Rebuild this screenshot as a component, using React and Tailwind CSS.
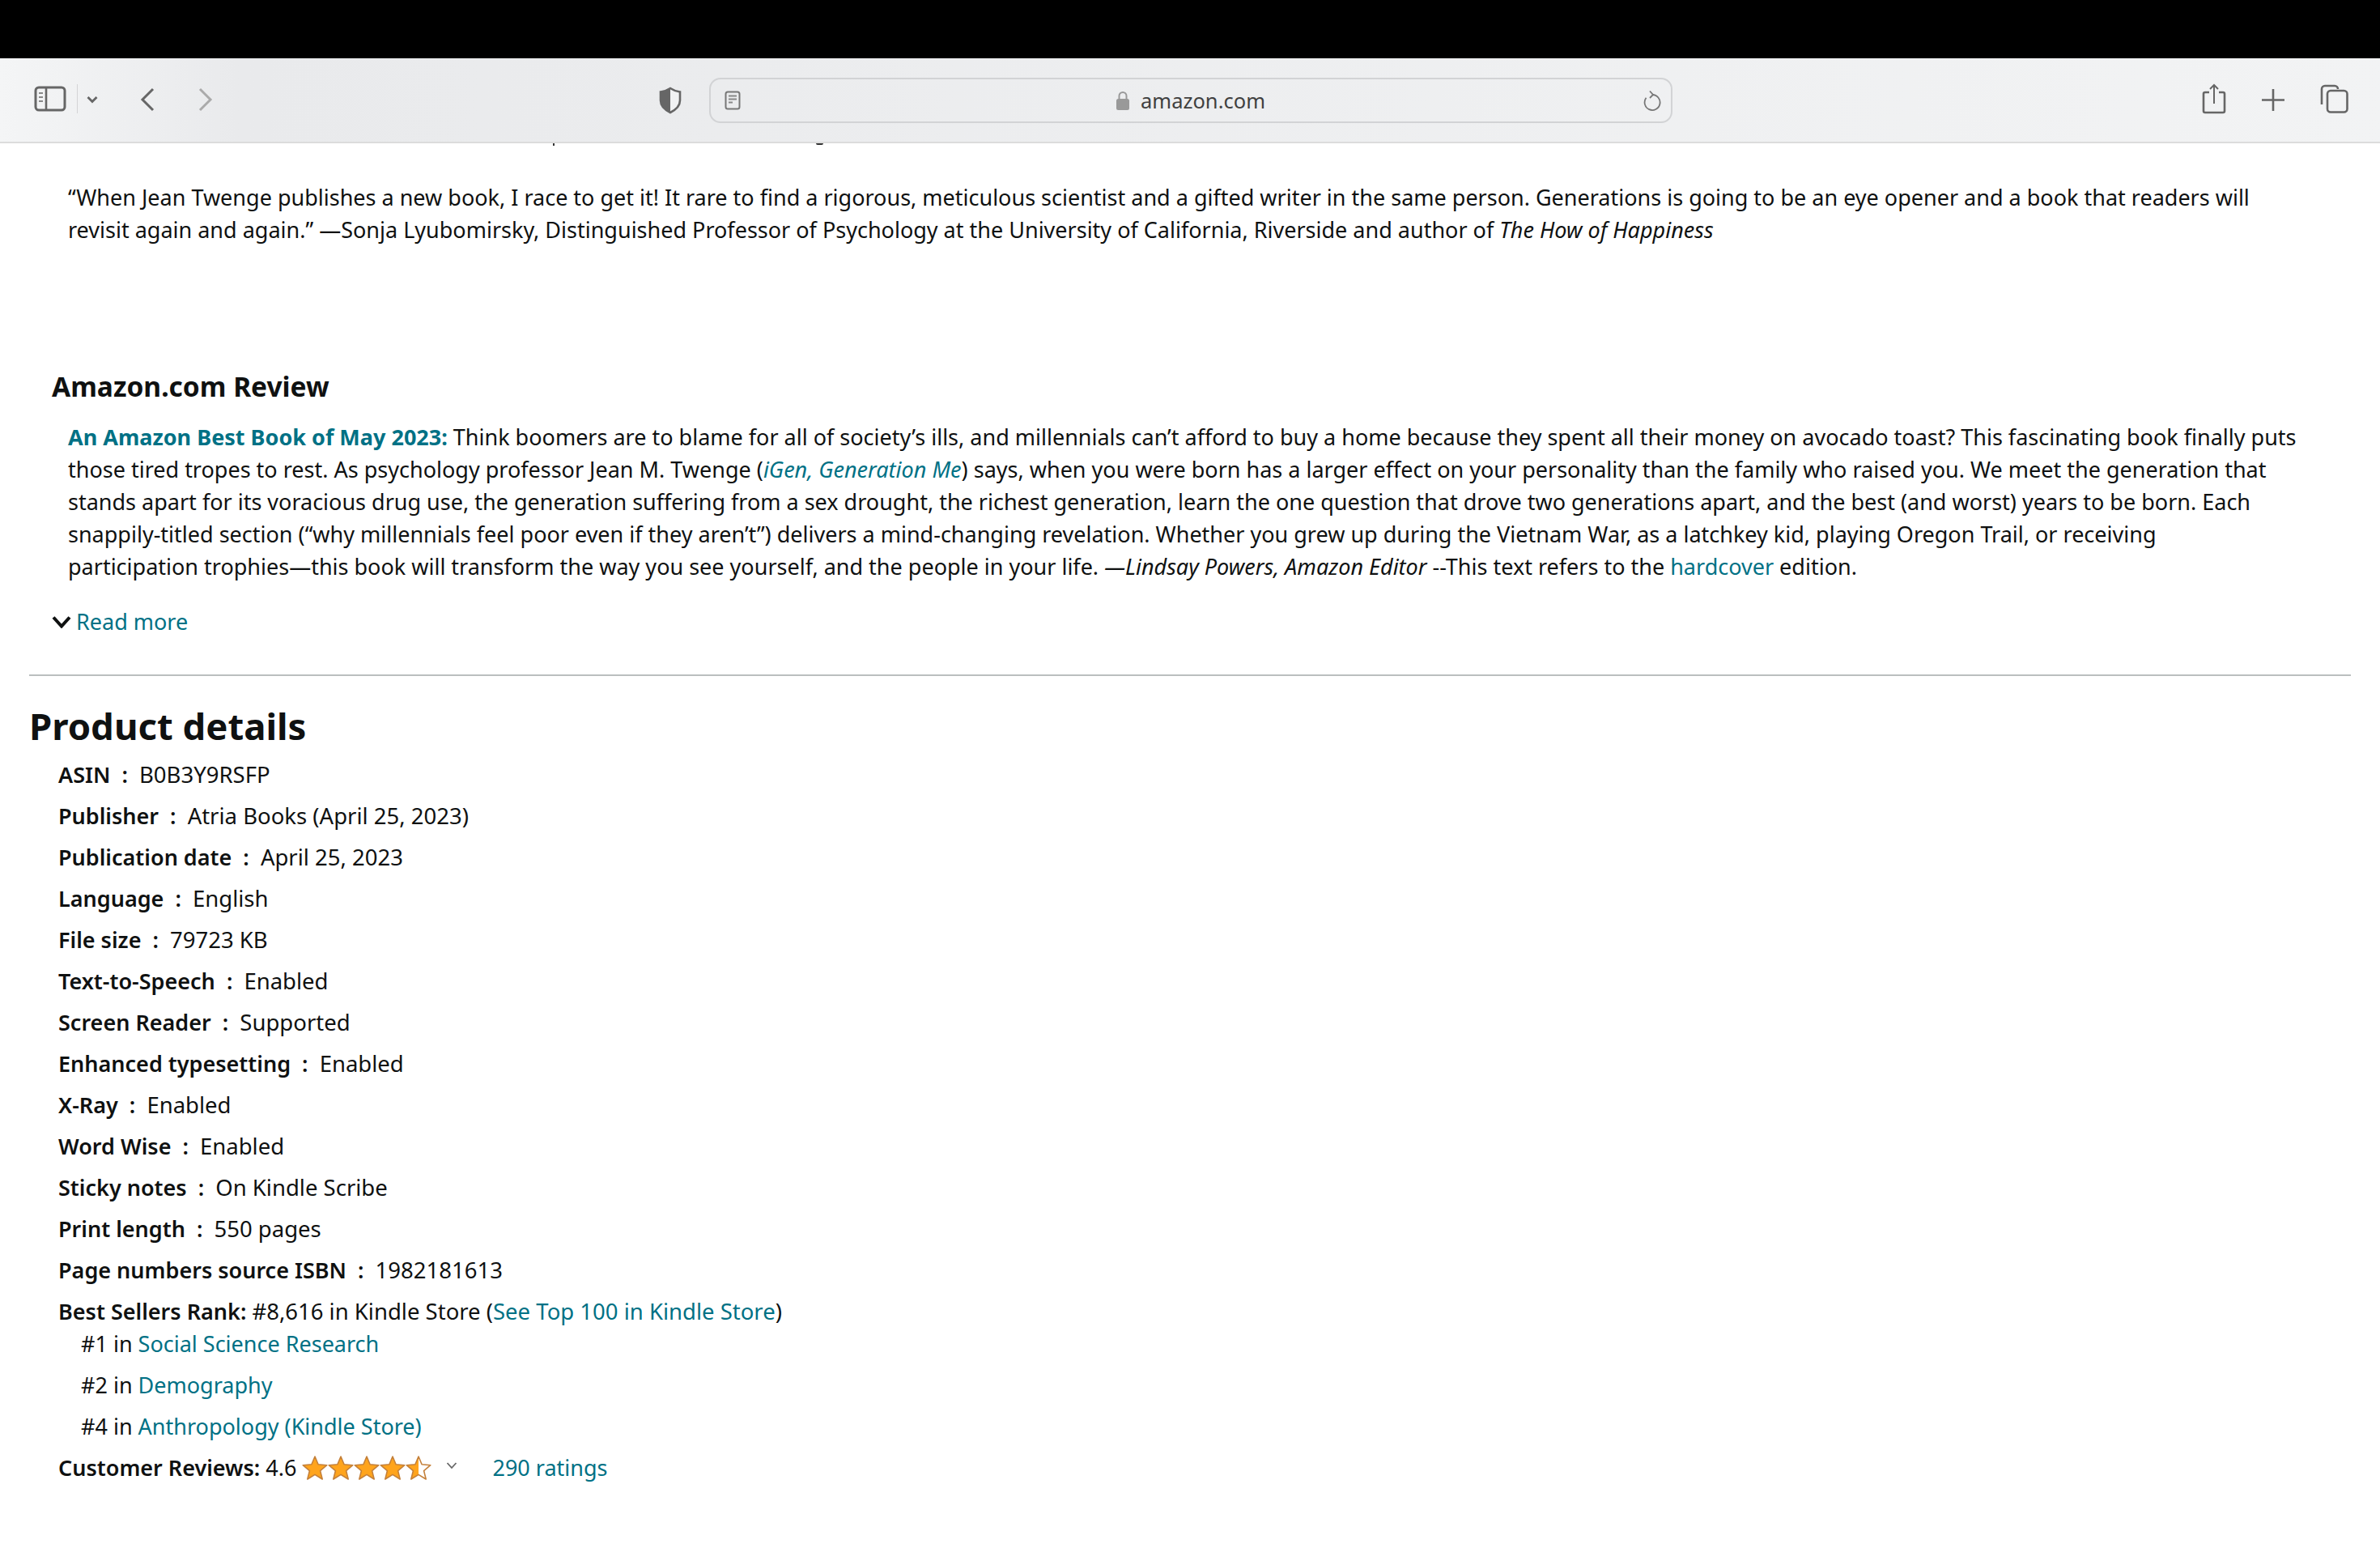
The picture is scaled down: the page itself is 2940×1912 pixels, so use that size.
import React from "react";

const Link = ({ children, className = "" }) => (
  <span className={`text-[#007185] ${className}`}>{children}</span>
);

const details = [
  ["ASIN", "B0B3Y9RSFP"],
  ["Publisher", "Atria Books (April 25, 2023)"],
  ["Publication date", "April 25, 2023"],
  ["Language", "English"],
  ["File size", "79723 KB"],
  ["Text-to-Speech", "Enabled"],
  ["Screen Reader", "Supported"],
  ["Enhanced typesetting", "Enabled"],
  ["X-Ray", "Enabled"],
  ["Word Wise", "Enabled"],
  ["Sticky notes", "On Kindle Scribe"],
  ["Print length", "550 pages"],
  ["Page numbers source ISBN", "1982181613"],
];

const ranks = [
  ["#1", "Social Science Research"],
  ["#2", "Demography"],
  ["#4", "Anthropology (Kindle Store)"],
];

const Star = ({ half }) => (
  <svg width="32" height="32" viewBox="0 0 32 32">
    <defs>
      <linearGradient id="halfStar">
        <stop offset="50%" stopColor="#ffa41c" />
        <stop offset="50%" stopColor="#ffffff" />
      </linearGradient>
    </defs>
    <path
      d="M16 2l4.100 9.800 10.700.9-8.200 6.900 2.600 10.400-9.200-5.600-9.200 5.600 2.600-10.400-8.200-6.900 10.700-.9z"
      fill={half ? "url(#halfStar)" : "#ffa41c"}
      stroke="#c4803a"
      strokeWidth="1.600"
      strokeLinejoin="round"
    />
  </svg>
);

const Toolbar = () => (
  <div className="h-[105px] shrink-0 flex items-center bg-linear-to-r from-[#f4f5f6] via-[#e9eaec] via-10% to-[#f2f3f4] border-b-2 border-[#dcdcdc] relative">
    {/* sidebar + chevron */}
    <svg width="40" height="32" viewBox="0 0 40 32" fill="none" stroke="#666" strokeWidth="3" className="ml-[42px] -mt-[3px]">
      <rect x="2" y="2" width="36" height="28" rx="4" />
      <path d="M15 2v28" strokeWidth="2.600" />
      <path d="M6 9h5M6 14h5M6 19h5" strokeWidth="2" stroke="#888" />
    </svg>
    <div className="ml-[13px] h-[36px] w-[1px] bg-[#d4d4d6] -mt-[3px]" />
    <svg width="14" height="10" viewBox="0 0 14 10" fill="none" stroke="#666" strokeWidth="2.800" className="ml-[11px] -mt-[2px]">
      <path d="M1.500 2l5.500 5.500L12.500 2" />
    </svg>
    <svg width="18" height="30" viewBox="0 0 18 30" fill="none" stroke="#666" strokeWidth="3" className="ml-[52px] -mt-[2px]">
      <path d="M16 2L3 15l13 13" />
    </svg>
    <svg width="18" height="30" viewBox="0 0 18 30" fill="none" stroke="#aaa" strokeWidth="3" className="ml-[54px] -mt-[2px]">
      <path d="M2 2l13 13L2 28" />
    </svg>

    {/* privacy shield */}
    <svg width="28" height="34" viewBox="0 0 28 34" className="ml-[551px]">
      <path d="M14 2C11 4 6 6 2 6.500V17c0 7 5 11.500 12 15 7-3.500 12-8 12-15V6.500C22 6 17 4 14 2z" fill="#f1f2f3" stroke="#666" strokeWidth="2.600" />
      <path d="M14 2C11 4 6 6 2 6.500V17c0 7 5 11.500 12 15z" fill="#666" />
    </svg>

    {/* address bar */}
    <div className="ml-[34px] w-[1190px] h-[56px] rounded-[14px] border-2 border-[#d2d3d5] flex items-center relative">
      <svg width="20" height="24" viewBox="0 0 20 24" fill="none" stroke="#777" strokeWidth="2" className="ml-[17px]">
        <rect x="1.500" y="1.500" width="17" height="21" rx="2.500" />
        <path d="M5 6.500h10M5 10.500h10M5 14.500h5" strokeWidth="1.800" stroke="#888" />
      </svg>
      <div className="absolute left-0 right-0 top-0 bottom-0 flex items-center justify-center gap-[14px] text-[25.500px] text-[#404040] font-['Noto_Sans',sans-serif]">
        <svg width="16" height="24" viewBox="0 0 16 24">
          <rect x="0" y="10" width="16" height="14" rx="2.500" fill="#999" />
          <path d="M3.500 11V6.500a4.500 4.500 0 0 1 9 0V11" fill="none" stroke="#999" strokeWidth="2" />
        </svg>
        <span>amazon.com</span>
      </div>
      <svg width="22" height="26" viewBox="0 0 22 26" fill="none" stroke="#777" strokeWidth="1.800" className="ml-auto mr-[12px]">
        <path d="M11 6a9.500 9.500 0 1 1-7.500 3.800" />
        <path d="M8 1.500l4 4.500-4 4" />
      </svg>
    </div>

    {/* right buttons */}
    <svg width="30" height="38" viewBox="0 0 30 38" fill="none" stroke="#666" strokeWidth="2.600" className="ml-[654px] -mt-[4px]">
      <path d="M9 11H4a2 2 0 0 0-2 2v21a2 2 0 0 0 2 2h22a2 2 0 0 0 2-2V13a2 2 0 0 0-2-2h-5" />
      <path d="M15 25V2M10 7l5-5 5 5" strokeWidth="2" />
    </svg>
    <svg width="28" height="27" viewBox="0 0 28 27" fill="none" stroke="#666" strokeWidth="2.600" className="ml-[44px] -mt-[1px]">
      <path d="M14 0v27M0 13.500h28" />
    </svg>
    <svg width="35" height="36" viewBox="0 0 35 36" fill="none" stroke="#666" strokeWidth="2.600" className="ml-[44px] -mt-[3px]">
      <path d="M2 25V6a4 4 0 0 1 4-4h12a4 4 0 0 1 4 4" />
      <rect x="9" y="8" width="24.500" height="26.500" rx="4" />
    </svg>
  </div>
);

export default function App() {
  return (
    <div className="w-[2940px] h-[1912px] bg-white overflow-hidden flex flex-col text-[#0f1111] text-[27px] leading-[40px] font-['Noto_Sans',sans-serif]">
      <div className="h-[72px] shrink-0 bg-black" />
      <Toolbar />

      {/* descenders of the line scrolled under the toolbar */}
      <div className="relative h-0">
        <div className="absolute left-[683px] top-0 w-[2px] h-[3px] bg-[#333]" />
        <div className="absolute left-[1008px] top-0 w-[9px] h-[2px] rounded-b-full bg-[#333]" />
      </div>

      <div className="pt-[47px] pl-[84px] pr-[90px]">
        <p>
          “When Jean Twenge publishes a new book, I race to get it! It rare to find a rigorous, meticulous scientist and a gifted writer in the same person. Generations is going to be an eye opener and a book that readers will revisit again and again.” —Sonja Lyubomirsky, Distinguished Professor of Psychology at the University of California, Riverside and author of <i>The How of Happiness</i>
        </p>
      </div>

      <h3 className="mt-[150px] ml-[64px] text-[33.500px] leading-[46px] font-bold">Amazon.com Review</h3>

      <div className="mt-[20px] pl-[84px] pr-[90px]">
        <p>
          <Link className="font-bold">An Amazon Best Book of May 2023:</Link> Think boomers are to blame for all of society’s ills, and millennials can’t afford to buy a home because they spent all their money on avocado toast? This fascinating book finally puts those tired tropes to rest. As psychology professor Jean M. Twenge (<Link className="italic">iGen, Generation Me</Link>) says, when you were born has a larger effect on your personality than the family who raised you. We meet the generation that stands apart for its voracious drug use, the generation suffering from a sex drought, the richest generation, learn the one question that drove two generations apart, and the best (and worst) years to be born. Each snappily-titled section (“why millennials feel poor even if they aren’t”) delivers a mind-changing revelation. Whether you grew up during the Vietnam War, as a latchkey kid, playing Oregon Trail, or receiving<br />participation trophies—this book will transform the way you see yourself, and the people in your life. <i>—Lindsay Powers, Amazon Editor</i> --This text refers to the <Link>hardcover</Link> edition.
        </p>
      </div>

      <div className="mt-[28px] ml-[64px] flex items-center gap-[6px]">
        <svg width="24" height="16" viewBox="0 0 24 16" fill="none" stroke="#0f1111" strokeWidth="4">
          <path d="M2 2.500l10 11 10-11" />
        </svg>
        <Link>Read more</Link>
      </div>

      <div className="mt-[45px] mx-[36px] h-[2px] bg-[#bbbfbf]" />

      <h2 className="mt-[31px] ml-[36px] text-[45.500px] leading-[60px] font-bold">Product details</h2>

      <div className="ml-[72px] mt-[5px] flex flex-col">
        {details.map(([label, value]) => (
          <div key={label} className="h-[51px] flex items-center whitespace-pre">
            <b className="font-semibold">{label}  :  </b>
            <span className="text-[27.500px]">{value}</span>
          </div>
        ))}
        <div className="h-[51px] flex items-center whitespace-pre">
          <b className="font-semibold">Best Sellers Rank: </b>
          <span className="text-[27.500px]">#8,616 in Kindle Store (<Link>See Top 100 in Kindle Store</Link>)</span>
        </div>
        <div className="ml-[28px] -mt-[11px] flex flex-col">
          {ranks.map(([rank, name]) => (
            <div key={rank} className="h-[51px] flex items-center whitespace-pre">
              <span>{rank} in </span>
              <Link>{name}</Link>
            </div>
          ))}
        </div>
        <div className="h-[51px] flex items-center whitespace-pre">
          <b className="font-semibold">Customer Reviews: </b>
          <span>4.6 </span>
          <div className="flex">
            <Star />
            <Star />
            <Star />
            <Star />
            <Star half />
          </div>
          <svg width="14" height="10" viewBox="0 0 14 10" fill="none" stroke="#666" strokeWidth="1.800" className="ml-[18px] -mt-[6px]">
            <path d="M1.500 2l5.500 6 5.500-6" />
          </svg>
          <Link className="ml-[43px]">290 ratings</Link>
        </div>
      </div>
    </div>
  );
}
